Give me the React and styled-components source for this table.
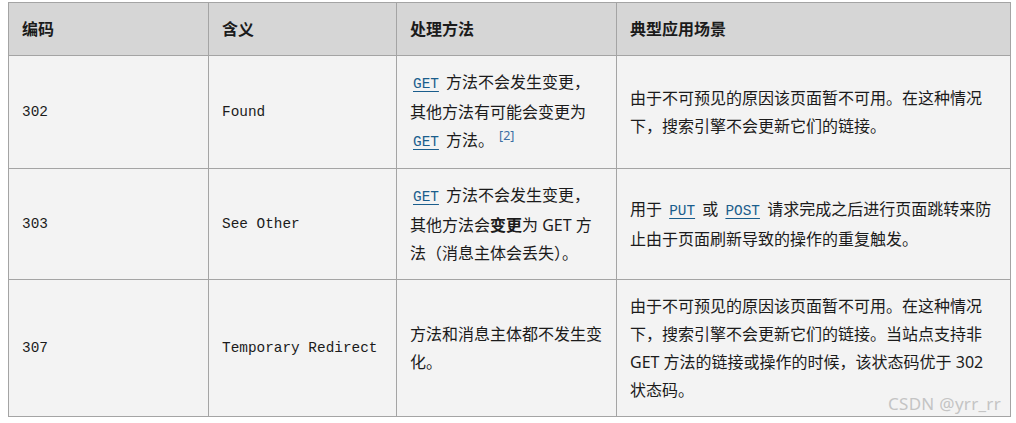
import React from "react";
import styled, { createGlobalStyle } from "styled-components";

const Global = createGlobalStyle`
  body {
    margin: 0;
    background: #ffffff;
    font-family: "Noto Sans", "Noto Sans CJK SC", sans-serif;
    color: #1b1b1b;
  }
`;

const Page = styled.div`
  position: relative;
  padding: 2px 0 0 8px;
  width: 1016px;
  height: 423px;
  box-sizing: border-box;
`;

const Table = styled.table`
  border-collapse: collapse;
  table-layout: fixed;
  width: 1002px;
  font-size: 16px;
  line-height: 28px;
`;

const Head = styled.th`
  background: #d6d6d6;
  border: 1px solid #a4a4a4;
  padding: 12px 13px;
  text-align: left;
  font-weight: bold;
`;

const Cell = styled.td`
  background: #f3f3f3;
  border: 1px solid #a4a4a4;
  padding: 12px 13px;
  vertical-align: middle;
  font-family: ${(p) =>
    p.$mono
      ? `"Liberation Mono", "DejaVu Sans Mono", monospace`
      : `"Noto Sans", "Noto Sans CJK SC", sans-serif`};
  font-size: ${(p) => (p.$mono ? "14.4px" : "16px")};
`;

const Code = styled.a`
  font-family: "Liberation Mono", "DejaVu Sans Mono", monospace;
  font-size: 14.4px;
  color: #1a5d8c;
  text-decoration: underline;
  text-underline-offset: 3px;
  margin: 0 3px;
`;

const Ref = styled.sup`
  font-size: 12.5px;
  line-height: 0;
  color: #3b6fa3;
  margin-left: 5px;
`;

const Watermark = styled.div`
  position: absolute;
  right: 15px;
  bottom: 8px;
  font-family: "Noto Sans", sans-serif;
  font-size: 17px;
  letter-spacing: 0.3px;
  color: #c4c4c4;
`;

const rows = [
  {
    code: "302",
    name: "Found",
    method: (
      <>
        <Code>GET</Code> 方法不会发生变更，其他方法有可能会变更为{" "}
        <Code>GET</Code> 方法。<Ref>[2]</Ref>
      </>
    ),
    usage: <>由于不可预见的原因该页面暂不可用。在这种情况下，搜索引擎不会更新它们的链接。</>,
  },
  {
    code: "303",
    name: "See Other",
    method: (
      <>
        <Code>GET</Code> 方法不会发生变更，其他方法会<b>变更</b>为 GET 方法（消息主体会丢失）。
      </>
    ),
    usage: (
      <>
        用于 <Code>PUT</Code> 或 <Code>POST</Code> 请求完成之后进行页面跳转来防止由于页面刷新导致的操作的重复触发。
      </>
    ),
  },
  {
    code: "307",
    name: "Temporary Redirect",
    method: <>方法和消息主体都不发生变化。</>,
    usage: (
      <>
        由于不可预见的原因该页面暂不可用。在这种情况下，搜索引擎不会更新它们的链接。当站点支持非
        GET 方法的链接或操作的时候，该状态码优于 302 状态码。
      </>
    ),
  },
];

export default function App() {
  return (
    <Page>
      <Global />
      <Table>
        <colgroup>
          <col style={{ width: 200 }} />
          <col style={{ width: 188 }} />
          <col style={{ width: 220 }} />
          <col style={{ width: 394 }} />
        </colgroup>
        <thead>
          <tr>
            <Head>编码</Head>
            <Head>含义</Head>
            <Head>处理方法</Head>
            <Head>典型应用场景</Head>
          </tr>
        </thead>
        <tbody>
          {rows.map((r) => (
            <tr key={r.code}>
              <Cell $mono>{r.code}</Cell>
              <Cell $mono>{r.name}</Cell>
              <Cell>{r.method}</Cell>
              <Cell>{r.usage}</Cell>
            </tr>
          ))}
        </tbody>
      </Table>
      <Watermark>CSDN @yrr_rr</Watermark>
    </Page>
  );
}
